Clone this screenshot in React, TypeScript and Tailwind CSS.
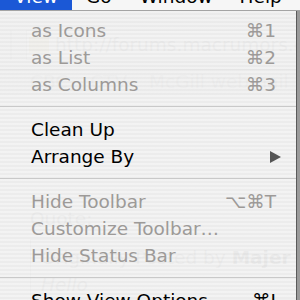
import React from "react"

type Item = {
  label: string
  shortcut?: string
  enabled?: boolean
  submenu?: boolean
}

const groups: Item[][] = [
  [
    { label: "as Icons", shortcut: "⌘1" },
    { label: "as List", shortcut: "⌘2" },
    { label: "as Columns", shortcut: "⌘3" },
  ],
  [
    { label: "Clean Up", enabled: true },
    { label: "Arrange By", enabled: true, submenu: true },
  ],
  [
    { label: "Hide Toolbar", shortcut: "⌥⌘T" },
    { label: "Customize Toolbar…" },
    { label: "Hide Status Bar" },
  ],
  [{ label: "Show View Options", shortcut: "⌘I", enabled: true }],
]

function MenuRow({ item }: { item: Item }) {
  const color = item.enabled ? "text-black" : "text-[#9d9a98]"
  return (
    <div className={`flex h-[27px] items-center pl-[31px] ${item.submenu ? "pr-[15px]" : "pr-[20px]"} ${color}`}>
      <span className="flex-1 whitespace-nowrap">{item.label}</span>
      {item.shortcut && <span className="whitespace-nowrap">{item.shortcut}</span>}
      {item.submenu && (
        <svg width="11" height="12" viewBox="0 0 11 12">
          <polygon points="0,0 11,6 0,12" fill="#555" />
        </svg>
      )}
    </div>
  )
}

function Separator() {
  return (
    <div className="pb-[9px] pt-[8px]">
      <div className="h-px bg-[#c9c9c9]" />
    </div>
  )
}

export default function App() {
  return (
    <div className="relative h-[300px] w-[300px] overflow-hidden bg-white font-['DejaVu_Sans',sans-serif] text-[18.5px]">
      {/* menu bar */}
      <div className="h-[11px] overflow-hidden border-b border-[#a4a4a4] bg-[#f6f6f6]">
        <div className="-mt-[13px] flex leading-[19px] text-black">
          <div className="flex h-[24px] w-[72px] justify-center bg-[#1b58d6] text-white">View</div>
          <span className="ml-[14px]">Go</span>
          <span className="ml-[28px]">Window</span>
          <span className="ml-[27px]">Help</span>
        </div>
      </div>

      {/* browser page seen through the menu */}
      <div className="flex h-[289px]">
        <div className="flex w-[297px] flex-col text-[#8a8a8a]">
          <div className="flex h-[86px] items-center gap-[14px] bg-[#e8e8e8] pl-[10px] pt-[10px]">
            <div className="h-[30px] w-[40px] rounded-[5px] border border-[#bbb]" />
            <div className="flex h-[30px] flex-1 items-center gap-[6px] border border-[#bbb] bg-white pl-[2px]">
              <div className="h-[16px] w-[20px] bg-[#e2cf8a]" />
              <span className="whitespace-nowrap">http://forums.macrumors.com</span>
            </div>
          </div>
          <div className="flex h-[26px] items-center gap-[22px] border-t border-[#777] bg-[#e0e0e0] pl-[30px] text-[#999]">
            <span>CBC</span>
            <span>CTV</span>
            <span className="whitespace-nowrap">McGill webmail</span>
            <span>Sh</span>
          </div>
          <div className="flex flex-1 flex-col pl-[30px] pt-[110px]">
            <span>Quote:</span>
            <div className="mt-[6px] flex flex-1 flex-col border border-[#bbb] pl-[10px] pt-[4px]">
              <span className="whitespace-nowrap">
                Originally Posted by <b className="text-[#555]">Majer</b>
              </span>
              <span className="italic">Hello</span>
            </div>
          </div>
        </div>
        <div className="flex-1 bg-[#9a9a9a]" />
      </div>

      {/* open View menu */}
      <div className="absolute left-0 top-[11px] w-[297px] border-r border-[#5a5a5a] bg-[repeating-linear-gradient(to_bottom,rgba(242,242,242,0.95)_0px,rgba(242,242,242,0.95)_2px,rgba(235,235,235,0.95)_2px,rgba(235,235,235,0.95)_4px)] pt-[6px] pb-[20px]">
        {groups.map((group, gi) => (
          <div key={gi}>
            {gi > 0 && <Separator />}
            {group.map((item) => (
              <MenuRow key={item.label} item={item} />
            ))}
          </div>
        ))}
      </div>
    </div>
  )
}
